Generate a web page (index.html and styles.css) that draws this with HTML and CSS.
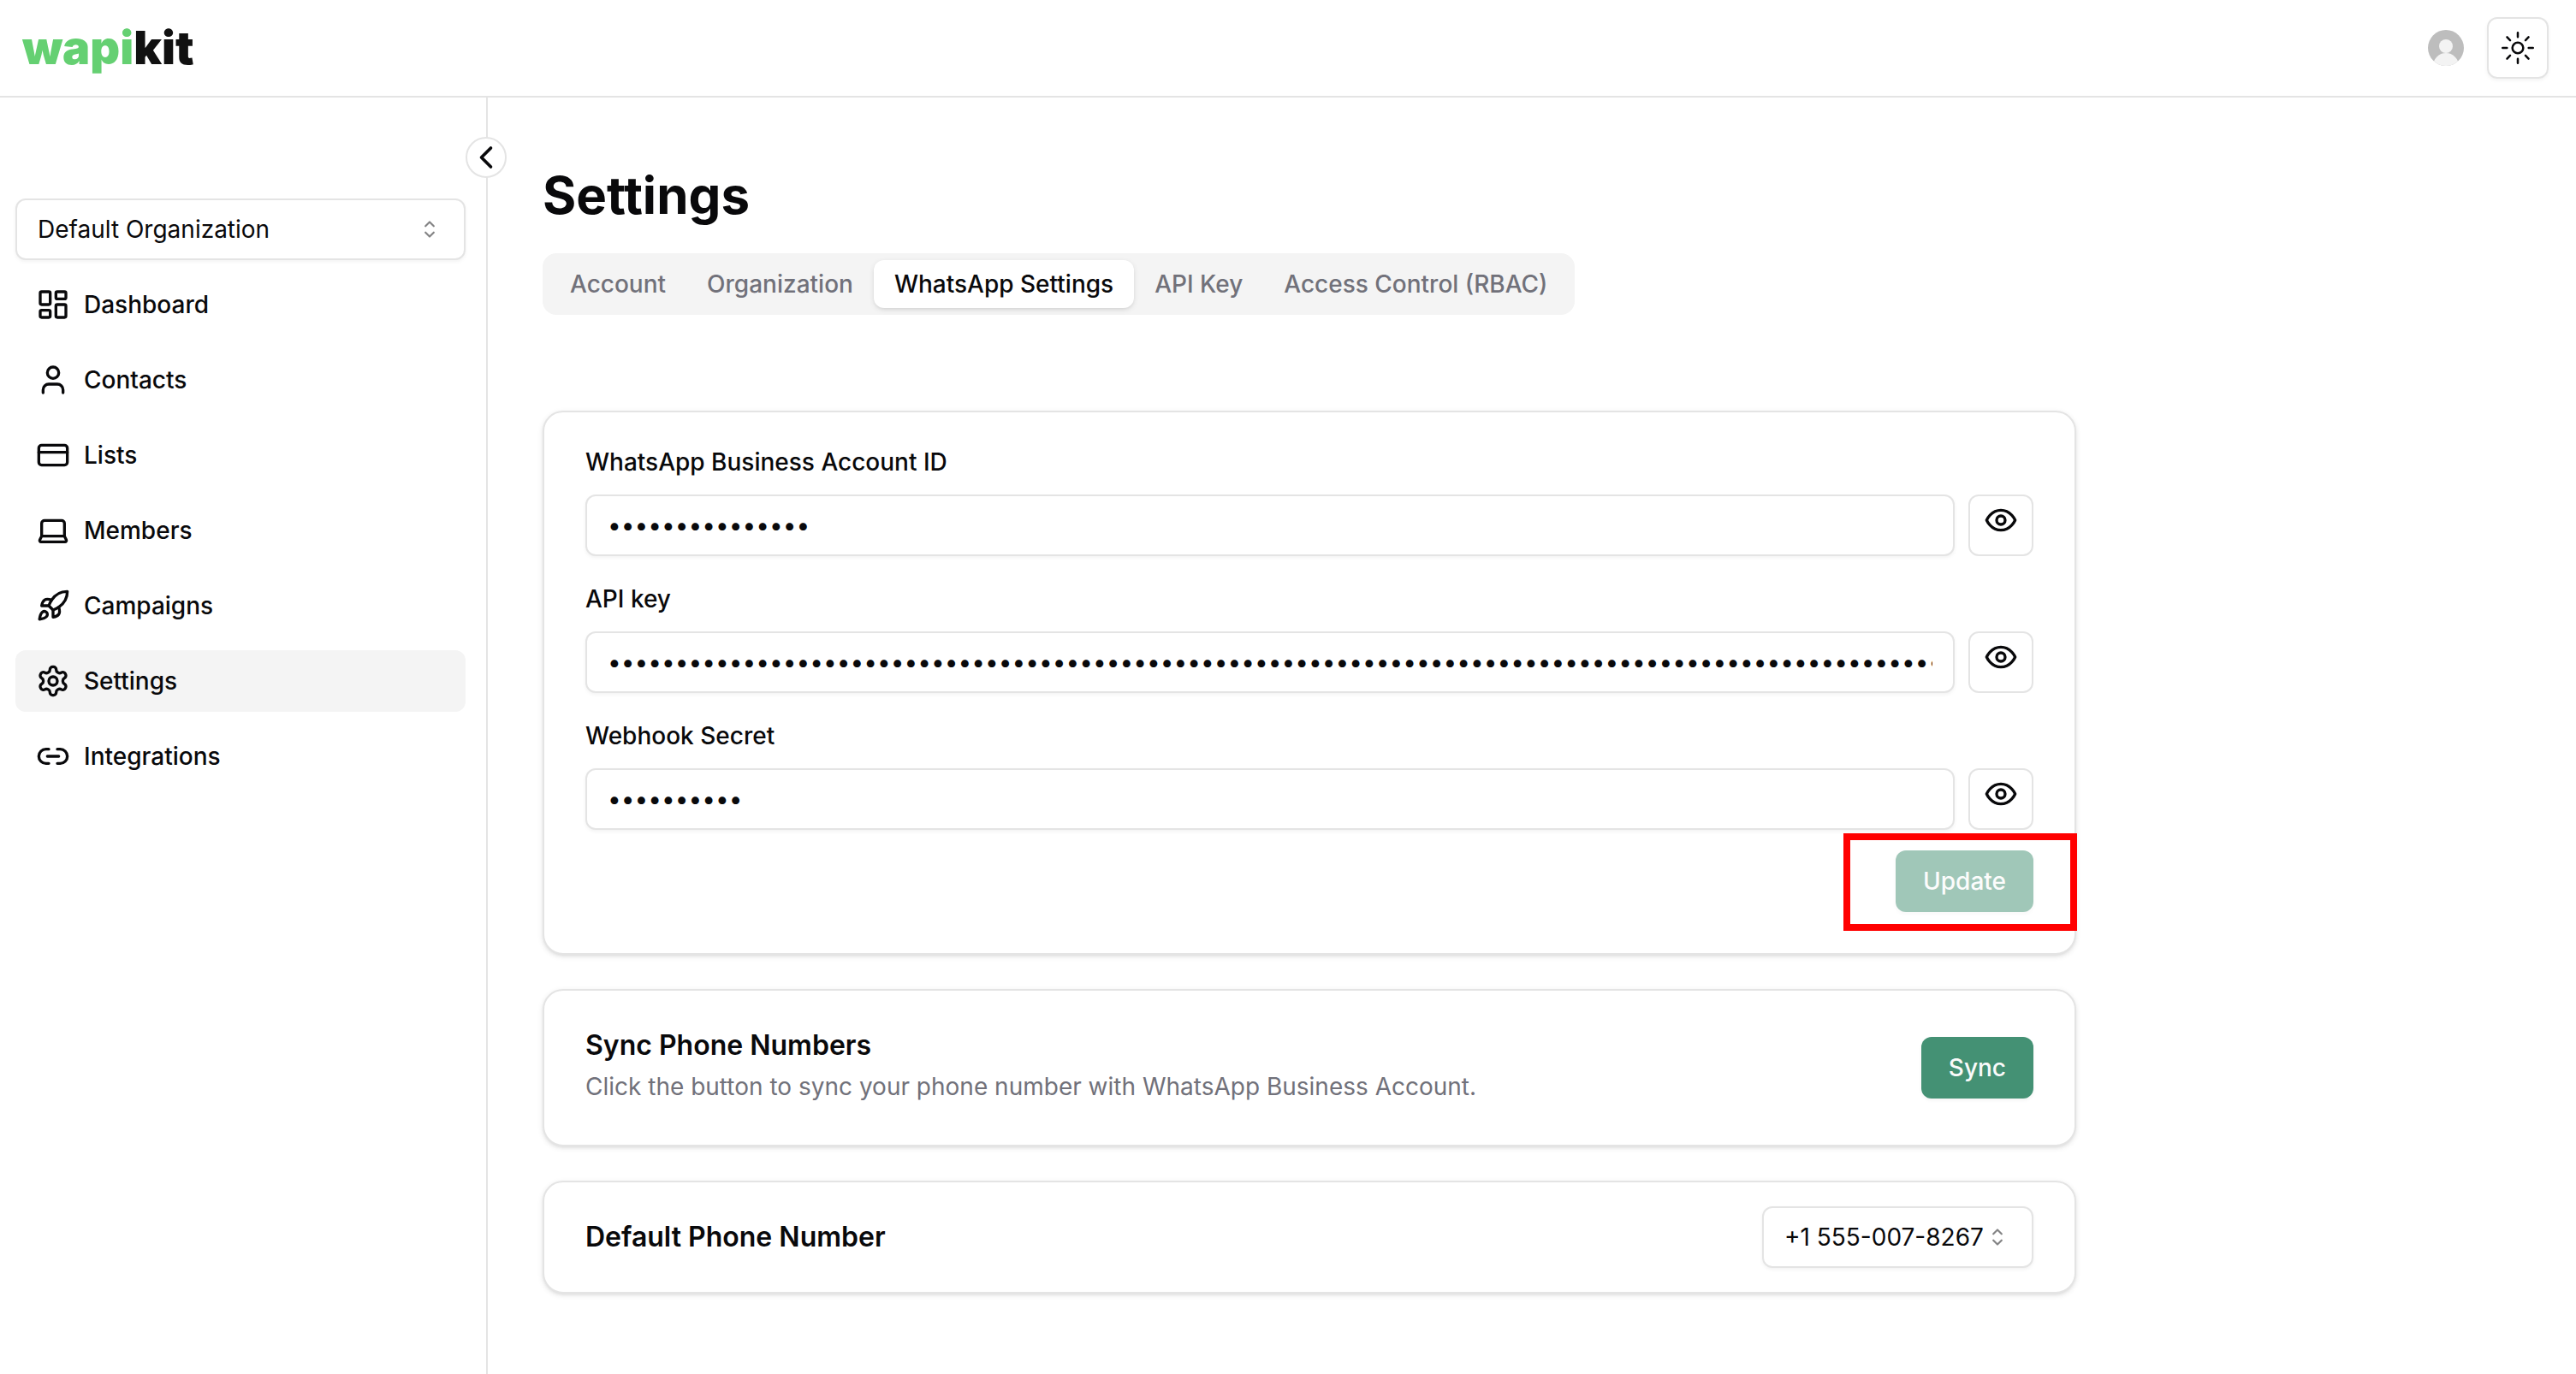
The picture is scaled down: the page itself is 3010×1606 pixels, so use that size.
FILE: index.html
```html
<!DOCTYPE html>
<html lang="en">
<head>
  <meta charset="utf-8">
  <meta name="viewport" content="width=device-width, initial-scale=1">
  <title>Settings - wapikit</title>
  <link rel="stylesheet" href="styles.css">
</head>
<body>
  <div class="app">
    <header class="topbar">
      <a class="logo" href="#"><span class="logo-accent">wapi</span>kit</a>
      <div class="topbar-actions">
        <svg class="avatar" viewBox="0 0 42 42" role="img" aria-label="User">
          <clipPath id="avatar-clip"><circle cx="21" cy="21" r="21"/></clipPath>
          <g clip-path="url(#avatar-clip)">
            <rect width="42" height="42" fill="#bdbdbd"/>
            <circle cx="21" cy="19" r="8" fill="#f3f3f3"/>
            <circle cx="21" cy="42" r="15" fill="#f3f3f3"/>
          </g>
        </svg>
        <button class="theme-button" type="button" aria-label="Toggle theme">
          <svg class="icon-sun" viewBox="0 0 15 15" fill="none" stroke="currentColor" stroke-linecap="round">
            <circle cx="7.5" cy="7.5" r="2.5"/>
            <path d="M7.5 .5v2M7.5 12.5v2M.5 7.5h2M12.5 7.5h2M2.55 2.55l1.41 1.41M11.04 11.04l1.41 1.41M2.55 12.45l1.41-1.41M11.04 3.96l1.41-1.41"/>
          </svg>
        </button>
      </div>
    </header>

    <div class="body">
      <aside class="sidebar">
        <button class="collapse" type="button" aria-label="Collapse sidebar">
          <svg class="icon-collapse" viewBox="0 0 24 24"><path d="m15 18-6-6 6-6"/></svg>
        </button>
        <div class="select">
          <select aria-label="Organization"><option>Default Organization</option></select>
          <svg class="caret" viewBox="0 0 15 15"><path d="M5.25 5.75 7.5 3.5l2.25 2.25M5.25 9.25 7.5 11.5l2.25-2.25"/></svg>
        </div>
        <nav class="nav">
          <a class="nav-item" href="#"><svg class="icon" viewBox="0 0 24 24"><rect x="3" y="3" width="7" height="9" rx="1"/><rect x="14" y="3" width="7" height="5" rx="1"/><rect x="14" y="12" width="7" height="9" rx="1"/><rect x="3" y="16" width="7" height="5" rx="1"/></svg>Dashboard</a>
          <a class="nav-item" href="#"><svg class="icon" viewBox="0 0 24 24"><path d="M19 21v-2a4 4 0 0 0-4-4H9a4 4 0 0 0-4 4v2"/><circle cx="12" cy="7" r="4"/></svg>Contacts</a>
          <a class="nav-item" href="#"><svg class="icon" viewBox="0 0 24 24"><rect x="2" y="5" width="20" height="14" rx="2"/><path d="M2 10h20"/></svg>Lists</a>
          <a class="nav-item" href="#"><svg class="icon" viewBox="0 0 24 24"><path d="M20 16V7a2 2 0 0 0-2-2H6a2 2 0 0 0-2 2v9m16 0H4m16 0 1.28 2.55a1 1 0 0 1-.9 1.45H3.62a1 1 0 0 1-.9-1.45L4 16"/></svg>Members</a>
          <a class="nav-item" href="#"><svg class="icon" viewBox="0 0 24 24"><path d="M4.500 16.500c-1.500 1.260-2 5-2 5s3.740-.5 5-2c.71-.84.7-2.130-.09-2.910a2.180 2.180 0 0 0-2.910-.09z"/><path d="m12 15-3-3a22 22 0 0 1 2-3.950A12.880 12.880 0 0 1 22 2c0 2.720-.78 7.500-6 11a22.350 22.350 0 0 1-4 2z"/><path d="M9 12H4s.55-3.030 2-4c1.620-1.080 5 0 5 0"/><path d="M12 15v5s3.030-.55 4-2c1.080-1.620 0-5 0-5"/></svg>Campaigns</a>
          <a class="nav-item active" href="#" aria-current="page"><svg class="icon" viewBox="0 0 24 24"><path d="M12.220 2h-.44a2 2 0 0 0-2 2v.18a2 2 0 0 1-1 1.730l-.43.25a2 2 0 0 1-2 0l-.15-.08a2 2 0 0 0-2.730.73l-.22.38a2 2 0 0 0 .73 2.730l.15.1a2 2 0 0 1 1 1.720v.51a2 2 0 0 1-1 1.740l-.15.09a2 2 0 0 0-.73 2.730l.22.38a2 2 0 0 0 2.730.73l.15-.08a2 2 0 0 1 2 0l.43.25a2 2 0 0 1 1 1.730V20a2 2 0 0 0 2 2h.44a2 2 0 0 0 2-2v-.18a2 2 0 0 1 1-1.730l.43-.25a2 2 0 0 1 2 0l.15.08a2 2 0 0 0 2.730-.73l.22-.39a2 2 0 0 0-.73-2.730l-.15-.08a2 2 0 0 1-1-1.740v-.5a2 2 0 0 1 1-1.740l.15-.09a2 2 0 0 0 .73-2.730l-.22-.38a2 2 0 0 0-2.730-.73l-.15.08a2 2 0 0 1-2 0l-.43-.25a2 2 0 0 1-1-1.730V4a2 2 0 0 0-2-2z"/><circle cx="12" cy="12" r="3"/></svg>Settings</a>
          <a class="nav-item" href="#"><svg class="icon" viewBox="0 0 24 24"><path d="M9 17H7A5 5 0 0 1 7 7h2M15 7h2a5 5 0 1 1 0 10h-2M8 12h8"/></svg>Integrations</a>
        </nav>
      </aside>

      <main class="main">
        <h1 class="page-title">Settings</h1>
        <div class="tabs" role="tablist">
          <button class="tab" type="button" role="tab" aria-selected="false">Account</button>
          <button class="tab" type="button" role="tab" aria-selected="false">Organization</button>
          <button class="tab" type="button" role="tab" aria-selected="true">WhatsApp Settings</button>
          <button class="tab" type="button" role="tab" aria-selected="false">API Key</button>
          <button class="tab" type="button" role="tab" aria-selected="false">Access Control (RBAC)</button>
        </div>

        <div class="cards">
          <form class="card credentials">
            <div class="field">
              <label for="account-id">WhatsApp Business Account ID</label>
              <div class="field-row">
                <input id="account-id" type="password" autocomplete="off" value="100000000000000">
                <button class="reveal" type="button" aria-label="Show account ID"><svg class="icon" viewBox="0 0 24 24"><path d="M2 12s3-7 10-7 10 7 10 7-3 7-10 7-10-7-10-7Z"/><circle cx="12" cy="12" r="3"/></svg></button>
              </div>
            </div>
            <div class="field">
              <label for="api-key">API key</label>
              <div class="field-row">
                <input id="api-key" type="password" autocomplete="off" value="000000000000000000000000000000000000000000000000000000000000000000000000000000000000000000000000000000000000000000000000">
                <button class="reveal" type="button" aria-label="Show API key"><svg class="icon" viewBox="0 0 24 24"><path d="M2 12s3-7 10-7 10 7 10 7-3 7-10 7-10-7-10-7Z"/><circle cx="12" cy="12" r="3"/></svg></button>
              </div>
            </div>
            <div class="field">
              <label for="webhook-secret">Webhook Secret</label>
              <div class="field-row">
                <input id="webhook-secret" type="password" autocomplete="off" value="0000000000">
                <button class="reveal" type="button" aria-label="Show webhook secret"><svg class="icon" viewBox="0 0 24 24"><path d="M2 12s3-7 10-7 10 7 10 7-3 7-10 7-10-7-10-7Z"/><circle cx="12" cy="12" r="3"/></svg></button>
              </div>
            </div>
            <div class="highlighted">
              <button class="primary" type="submit" disabled>Update</button>
            </div>
          </form>

          <section class="card row-card">
            <div class="card-text">
              <h2 class="card-title">Sync Phone Numbers</h2>
              <p class="card-description">Click the button to sync your phone number with WhatsApp Business Account.</p>
            </div>
            <button class="primary" type="button">Sync</button>
          </section>

          <section class="card row-card phone-card">
            <h2 class="card-title"><label for="phone">Default Phone Number</label></h2>
            <div class="select">
              <select id="phone"><option>+1 555-007-8267</option></select>
              <svg class="caret" viewBox="0 0 15 15"><path d="M5.25 5.75 7.5 3.5l2.25 2.25M5.25 9.25 7.5 11.5l2.25-2.25"/></svg>
            </div>
          </section>
        </div>
      </main>
    </div>
  </div>
</body>
</html>
```
FILE: styles.css
```css
:root {
  --text: #09090b;
  --muted: #71717a;
  --muted-bg: #f4f4f4;
  --border: #e4e4e4;
  --primary: #449174;
  --shadow-sm: 0 2px 4px rgba(0, 0, 0, .05);
  --shadow: 0 2px 6px rgba(0, 0, 0, .1), 0 2px 4px -2px rgba(0, 0, 0, .1);
}

* {
  box-sizing: border-box;
}

body {
  margin: 0;
  background: #fff;
  color: var(--text);
  font: 400 28px/40px Inter, "Liberation Sans", sans-serif;
}

h1, h2, p {
  margin: 0;
}

button, input, select {
  font: inherit;
  color: inherit;
}

button {
  padding: 0;
  border: 0;
  background: none;
}

svg {
  display: block;
  flex: none;
}

.app {
  display: flex;
  flex-direction: column;
  min-height: 100vh;
}

.icon, .icon-collapse {
  width: 40px;
  height: 40px;
  fill: none;
  stroke: currentColor;
  stroke-width: 2;
  stroke-linecap: round;
  stroke-linejoin: round;
}

/* Top bar */

.topbar {
  display: flex;
  align-items: center;
  justify-content: space-between;
  height: 114px;
  padding: 0 32px 0 26px;
  border-bottom: 2px solid var(--border);
}

.logo {
  color: #111;
  font-size: 54px;
  font-weight: 900;
  line-height: 72px;
  text-decoration: none;
}

.logo-accent {
  color: #65d072;
}

.topbar-actions {
  display: flex;
  align-items: center;
  gap: 27px;
}

.avatar {
  width: 42px;
  height: 42px;
}

.theme-button {
  display: grid;
  place-items: center;
  width: 72px;
  height: 72px;
  border: 2px solid var(--border);
  border-radius: 12px;
  box-shadow: var(--shadow-sm);
}

.icon-sun {
  width: 38px;
  height: 38px;
}

/* Sidebar */

.body {
  display: flex;
  flex: 1;
}

.sidebar {
  position: relative;
  flex: none;
  width: 570px;
  padding: 118px 24px 32px 18px;
  border-right: 2px solid var(--border);
}

.collapse {
  position: absolute;
  top: 46px;
  right: -24px;
  width: 48px;
  height: 48px;
  border: 2px solid var(--border);
  border-radius: 50%;
  background: #fff;
}

.icon-collapse {
  width: 44px;
  height: 44px;
}

.select {
  display: grid;
  align-items: center;
}

.select > * {
  grid-area: 1 / 1;
}

.select select {
  width: 100%;
  height: 72px;
  padding: 0 56px 0 24px;
  appearance: none;
  border: 2px solid var(--border);
  border-radius: 12px;
  background: #fff;
  box-shadow: var(--shadow-sm);
}

.caret {
  justify-self: end;
  width: 32px;
  height: 32px;
  margin-right: 26px;
  fill: none;
  stroke: currentColor;
  stroke-linecap: round;
  stroke-linejoin: round;
  opacity: .5;
  pointer-events: none;
}

.nav {
  display: flex;
  flex-direction: column;
  gap: 16px;
  margin-top: 16px;
}

.nav-item {
  display: flex;
  align-items: center;
  gap: 16px;
  height: 72px;
  padding: 0 24px;
  border-radius: 12px;
  color: inherit;
  font-weight: 500;
  text-decoration: none;
}

.nav-item.active {
  background: var(--muted-bg);
}

/* Main column */

.main {
  flex: 1;
  min-width: 0;
  padding: 78px 64px 64px;
}

.page-title {
  font-size: 60px;
  font-weight: 700;
  line-height: 72px;
}

.tabs {
  display: flex;
  width: fit-content;
  margin-top: 32px;
  padding: 8px;
  border-radius: 16px;
  background: var(--muted-bg);
}

.tab {
  height: 56px;
  padding: 0 24px;
  border-radius: 12px;
  color: var(--muted);
  font-weight: 500;
}

.tab[aria-selected="true"] {
  background: #fff;
  color: var(--text);
  box-shadow: var(--shadow);
}

.cards {
  display: flex;
  flex-direction: column;
  gap: 40px;
  max-width: 1792px;
  margin-top: 112px;
}

.card {
  border: 2px solid var(--border);
  border-radius: 24px;
  background: #fff;
  box-shadow: var(--shadow);
}

.credentials {
  display: flex;
  flex-direction: column;
  gap: 24px;
  padding: 32px 48px 48px;
}

.field {
  display: flex;
  flex-direction: column;
  gap: 12px;
}

.field label {
  font-weight: 500;
  line-height: 52px;
}

.field-row {
  display: flex;
  gap: 16px;
}

.field-row input {
  flex: 1;
  min-width: 0;
  height: 72px;
  padding: 0 24px;
  border: 2px solid var(--border);
  border-radius: 12px;
  background: #fff;
  box-shadow: var(--shadow-sm);
}

.reveal {
  display: flex;
  align-items: flex-start;
  padding: 8px 16px;
  border: 2px solid var(--border);
  border-radius: 12px;
}

.primary {
  height: 72px;
  padding: 0 32px;
  border-radius: 12px;
  background: var(--primary);
  color: #fafafa;
  font-weight: 500;
  box-shadow: var(--shadow-sm);
}

.primary:disabled {
  opacity: .5;
}

.highlighted {
  position: relative;
  align-self: flex-end;
  display: flex;
}

/* Callout frame drawn over the card edge */
.highlighted::after {
  content: "";
  position: absolute;
  inset: -20px -51px -22px -61px;
  border: 8px solid #f00;
  pointer-events: none;
}

.row-card {
  display: flex;
  align-items: center;
  justify-content: space-between;
  gap: 32px;
  padding: 0 48px;
}

.card-text {
  display: flex;
  flex-direction: column;
  gap: 4px;
  padding: 40px 0 48px;
}

.card-title {
  font-size: 32px;
  font-weight: 600;
  line-height: 48px;
}

.card-description {
  color: var(--muted);
}

.phone-card {
  padding: 28px 48px;
}
```
